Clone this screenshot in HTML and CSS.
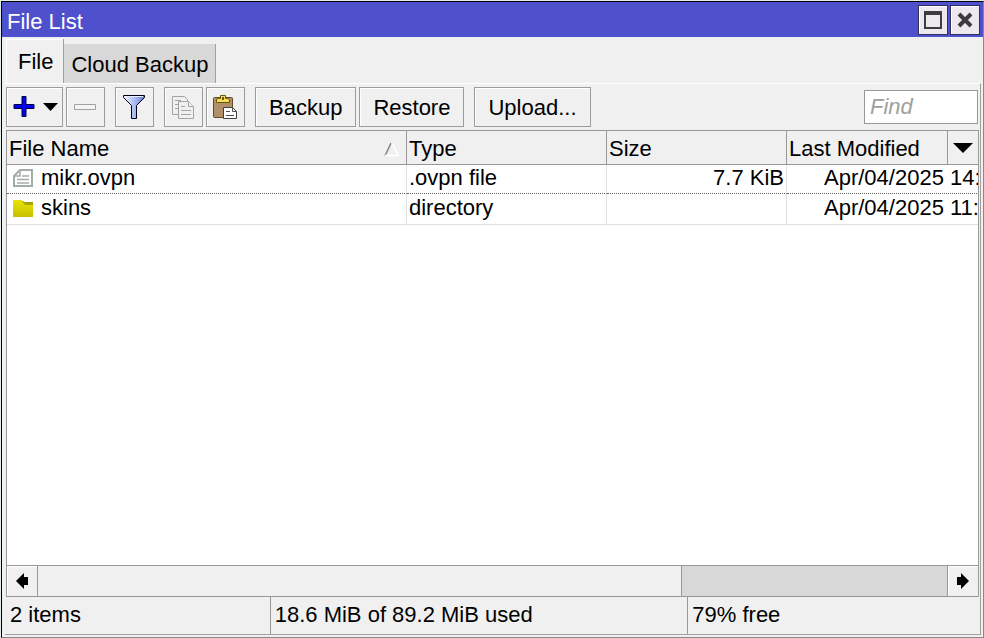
FILE: index.html
```html
<!DOCTYPE html>
<html lang="en">
<head>
<meta charset="utf-8">
<title>File List</title>
<link rel="stylesheet" href="styles.css">
</head>
<body>
<main class="window">
  <header class="titlebar">
    <h1 class="title">File List</h1>
    <button class="win-btn" aria-label="Maximize"><svg width="18" height="18" viewBox="0 0 18 18" shape-rendering="crispEdges"><path d="M0 0h18v18H0zM2 4v12h14V4z" fill="#3c3c40" fill-rule="evenodd"/></svg></button>
    <button class="win-btn" aria-label="Close"><svg width="18" height="18" viewBox="0 0 18 18"><path d="M3 3L15 15M15 3L3 15" stroke="#3c3c40" stroke-width="4"/></svg></button>
  </header>
  <nav class="tabs">
    <button class="tab active">File</button>
    <button class="tab">Cloud Backup</button>
  </nav>
  <section class="panel">
    <div class="toolbar">
      <div class="group">
        <button class="btn add" aria-label="Add"><svg width="46" height="24" viewBox="0 0 46 24"><path d="M10 1.500h4v8h8v4h-8v8h-4v-8h-8v-4h8z" fill="#0000f0" stroke="#000040"/><path d="M31 8h15l-7.500 8z" fill="#000"/></svg></button>
        <button class="btn icon" aria-label="Remove"><svg width="24" height="24" viewBox="0 0 24 24"><path d="M.5 9.500h21v5h-21z" fill="#f4f4f4" stroke="#a0a0a0"/></svg></button>
      </div>
      <div class="group">
        <button class="btn icon" aria-label="Filter"><svg width="24" height="26" viewBox="0 0 24 26"><defs><linearGradient id="fn"><stop offset="0" stop-color="#f4f8ff"/><stop offset=".6" stop-color="#a0b4f0"/><stop offset="1" stop-color="#6078c8"/></linearGradient></defs><path d="M.5 1.500h21v2l-8 8v13h-5v-13l-8-8z" fill="url(#fn)" stroke="#000010"/><path d="M2 2.500h18" stroke="#e8f0ff"/></svg></button>
      </div>
      <div class="group">
        <button class="btn icon" aria-label="Copy"><svg width="24" height="26" viewBox="0 0 24 26" fill="#f0f0f0" stroke="#a4a4a4"><path d="M.5 2.500h12l3 3v15h-15z"/><path d="M3 6.500h6M3 10.500h4M3 14.500h4"/><path d="M6.500 7.500h10l5 5v12h-15z"/><path d="M16.500 7.500v5h5M9 12.500h4M9 16.500h10M9 20.500h10"/></svg></button>
        <button class="btn icon" aria-label="Paste"><svg width="26" height="26" viewBox="0 0 26 26"><rect x=".5" y="3.500" width="19" height="20" rx="1" fill="#b09068" stroke="#604828"/><path d="M3.500 8.500v-3l2-1h2v-3h5v3h2l2 1v3z" fill="#f4dc60" stroke="#705800"/><path d="M9 3h2v3h-2z" fill="#705800"/><path d="M10.500 13.500h9l4 4v7h-13z" fill="#fff" stroke="#404040"/><path d="M19.500 13.500v4h4M13 17.500h4M13 21.500h8" fill="none" stroke="#505050"/></svg></button>
      </div>
      <div class="group">
        <button class="btn">Backup</button>
        <button class="btn">Restore</button>
      </div>
      <button class="btn">Upload...</button>
      <input class="find" type="text" placeholder="Find" aria-label="Find">
    </div>
    <div class="list">
      <div class="rows">
        <table class="files">
          <colgroup><col class="c-name"><col class="c-type"><col class="c-size"><col></colgroup>
          <thead><tr>
            <th><div class="sort">File Name<svg width="16" height="15" viewBox="0 0 16 15"><path d="M1 14L7 1" stroke="#808080" stroke-width="1.500"/><path d="M8 1L14.500 13.500H1" fill="none" stroke="#fff" stroke-width="1.500"/></svg></div></th>
            <th>Type</th><th>Size</th><th>Last Modified</th>
          </tr></thead>
          <tbody>
            <tr class="focused"><td><div class="name"><svg width="20" height="20" viewBox="0 0 20 20" fill="none" stroke="#a2aca8" stroke-width="2"><path d="M7 2h12v16H1V8z"/><path d="M7 2v6H1M9 8h7M4 11.500h12M4 15h12" stroke-width="1.500"/></svg>mikr.ovpn</div></td><td>.ovpn file</td><td class="num">7.7 KiB</td><td class="date">Apr/04/2025 14:</td></tr>
            <tr><td><div class="name"><svg width="20" height="20" viewBox="0 0 20 20"><defs><linearGradient id="fd" x2="0" y2="1"><stop offset="0" stop-color="#e8e400"/><stop offset="1" stop-color="#c8c000"/></linearGradient></defs><path d="M0 2h8l3 2h9v15H0z" fill="url(#fd)"/><path d="M8 2l3 2h9v3h-8z" fill="#a8a400"/></svg>skins</div></td><td>directory</td><td></td><td class="date">Apr/04/2025 11:</td></tr>
          </tbody>
        </table>
        <button class="columns" aria-label="Columns"><svg width="20" height="10" viewBox="0 0 20 10"><path d="M0 0h20L10 10z"/></svg></button>
      </div>
      <div class="scroll">
        <button class="arrow" aria-label="Scroll left"><svg width="12" height="16" viewBox="0 0 12 16"><path d="M0 8L8 0v4h4v8H8v4z"/></svg></button>
        <div class="thumb"></div>
        <div class="track"></div>
        <button class="arrow" aria-label="Scroll right"><svg width="12" height="16" viewBox="0 0 12 16"><path d="M12 8L4 0v4H0v8h4v4z"/></svg></button>
      </div>
    </div>
    <footer class="status"><span>2 items</span><span>18.6 MiB of 89.2 MiB used</span><span>79% free</span></footer>
  </section>
</main>
</body>
</html>
```
FILE: styles.css
```css
* { box-sizing: border-box; }
body {
  margin: 0;
  padding: 1px 0 0 1px;
  height: 100vh;
  display: flex;
  background: #e4eee8;
  color: #000;
  font: 22px/26px "Liberation Sans", Arial, sans-serif;
}
button, input { font: inherit; color: inherit; margin: 0; }
button { display: flex; align-items: center; justify-content: center; padding: 0; border-radius: 0; }
svg { display: block; flex: none; }
.window {
  flex: 1;
  min-width: 0;
  display: flex;
  flex-direction: column;
  background: #f0f0f0;
  border: 1px solid #000;
  border-right-color: #888;
  border-bottom-color: #888;
}
.titlebar {
  display: flex;
  align-items: center;
  gap: 2px;
  height: 35px;
  padding: 0 3px 0 5px;
  background: #4f50cc;
}
.title { flex: 1; margin: 0; padding-top: 4px; font-size: 22px; font-weight: 400; color: #fff; }
.win-btn { width: 30px; height: 30px; border: 1px solid #303060; background: #ece8ee; box-shadow: inset 1px 1px #fff; }
.tabs { display: flex; align-items: flex-end; height: 46px; padding: 0 0 0 4px; }
.tab { height: 39px; padding: 2px 7px 0 7px; border: 0; border-right: 1px solid #a0a0a0; background: #d8d8d8; }
.tab.active { height: 44px; padding: 2px 10px 0 12px; background: #f0f0f0; box-shadow: inset 1px 1px #fff; }
.panel {
  flex: 1;
  min-height: 0;
  display: flex;
  flex-direction: column;
  margin: 0 2px 2px 3px;
  border-right: 1px solid #a0a0a0;
  border-bottom: 1px solid #a0a0a0;
  border-top: 1px solid #fff;
}
.toolbar { display: flex; align-items: center; gap: 10px; padding: 3px 2px 3px 1px; }
.group { display: flex; gap: 3px; }
.btn { height: 40px; padding: 2px 13px 0; border: 1px solid #9c9c9c; background: #f0f0f0; box-shadow: inset 1px 1px #fff; }
.btn.icon { width: 39px; padding: 0; }
.btn.add { width: 57px; padding: 0; }
.find { width: 114px; height: 34px; margin-left: auto; padding: 0 5px; border: 1px solid #989898; background: #fff; }
.find::placeholder { color: #a0a0a0; font-style: italic; opacity: 1; }
.list { flex: 1; min-height: 0; display: flex; flex-direction: column; margin: 0 1px; border: 1px solid #989898; background: #fff; }
.rows { flex: 1; min-height: 0; position: relative; overflow: hidden; }
.files { width: 1040px; table-layout: fixed; border-collapse: separate; border-spacing: 0; }
.c-name { width: 400px; }
.c-type { width: 200px; }
.c-size { width: 180px; }
th { height: 34px; padding: 3px 2px 0; border-right: 1px solid #989898; border-bottom: 1px solid #989898; background: #f0f0f0; font-weight: 400; text-align: left; }
td { height: 31px; padding: 0 2px 2px; border-right: 1px solid #e0e0e0; border-bottom: 1px solid #e0e0e0; white-space: nowrap; }
.focused td { height: 29px; border-bottom: 1px dotted #606060; }
.sort { display: flex; justify-content: space-between; align-items: center; padding-right: 4px; }
.name { display: flex; align-items: center; gap: 8px; padding-left: 4px; }
td.num { text-align: right; }
td.date { padding-left: 37px; }
.columns { position: absolute; top: 0; right: 0; width: 31px; height: 34px; border: 0; border-left: 1px solid #989898; border-bottom: 1px solid #989898; background: #f0f0f0; }
.scroll { display: flex; height: 31px; border-top: 1px solid #989898; background: #d8d8d8; }
.arrow { width: 30px; border: 0; background: #f0f0f0; box-shadow: inset 1px 1px #fff; }
.thumb { flex: 644; border: solid #989898; border-width: 0 1px; background: #f0f0f0; }
.track { flex: 266; border-right: 1px solid #989898; }
.status { display: grid; grid-template-columns: 265fr 418fr 292fr; height: 37px; padding-left: 1px; }
.status span { padding: 5px 4px; border-right: 1px solid #989898; }
.status span:last-child { border-right: 0; }
```
